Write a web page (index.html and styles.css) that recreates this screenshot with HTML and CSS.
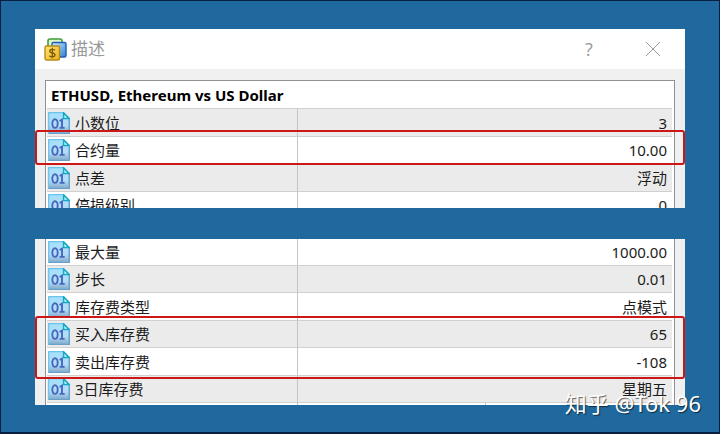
FILE: index.html
```html
<!DOCTYPE html>
<html lang="zh-CN">
<head>
    <meta charset="UTF-8">
    <meta name="viewport" content="width=device-width, initial-scale=1.0">
    <title>描述</title>
    <link rel="stylesheet" href="styles.css">
</head>
<body>

<!-- Shared icon shapes -->
<svg class="sprite" aria-hidden="true">
    <defs>
        <linearGradient id="page-fill" x1="0" y1="0" x2="0" y2="1">
            <stop offset="0" stop-color="#a4e0fb"/>
            <stop offset="0.6" stop-color="#b4dcf8"/>
            <stop offset="1" stop-color="#86abcb"/>
        </linearGradient>
        <linearGradient id="gold-fill" x1="0" y1="0" x2="1" y2="1">
            <stop offset="0" stop-color="#ffe672"/>
            <stop offset="1" stop-color="#efb21e"/>
        </linearGradient>
        <linearGradient id="blue-fill" x1="0" y1="0" x2="1" y2="1">
            <stop offset="0" stop-color="#d2ecff"/>
            <stop offset="1" stop-color="#2c7fd6"/>
        </linearGradient>
        <symbol id="number" viewBox="0 0 22 22">
            <path d="M.7.7h15l5.6 5.6v15H.7z" fill="url(#page-fill)" stroke="#6cc3ec" stroke-width="1.3"/>
            <path d="M.7 21.3h20.6V6" fill="none" stroke="#6c9fc8" stroke-width="1.3"/>
            <path d="M15.6 1v5.6H21z" fill="#c9fbff" stroke="#14a9c4" stroke-width="1.5"/>
            <ellipse cx="7" cy="11.6" rx="2.7" ry="4.3" fill="none" stroke="#4468bd" stroke-width="1.9"/>
            <path d="M11.6 9l2.4-1.4v8.300M11.600 15.900h5" fill="none" stroke="#4468bd" stroke-width="1.9"/>
        </symbol>
    </defs>
</svg>

<main class="page">
    <section class="panel panel-top">
        <header class="titlebar">
            <svg class="logo" viewBox="0 0 23 23" aria-hidden="true">
                <path d="M4 7V3q0-2 2-2h10q2 0 2 2v9H4z" fill="#dff5c8" stroke="#3f9d3a" stroke-width="1.6"/>
                <rect x="8" y="4.5" width="14" height="14.5" rx="1.5" fill="url(#blue-fill)" stroke="#1f5fb0" stroke-width="1.4"/>
                <rect x="1" y="8" width="14.5" height="14" rx="1.5" fill="url(#gold-fill)" stroke="#b98a18" stroke-width="1.4"/>
                <path d="M11 12.3q-1-1-2.8-1-2.5 0-2.5 1.8 0 1.5 2.6 1.9 2.7.4 2.7 2 0 1.8-2.7 1.8-2 0-3-1.1M8.3 9.8v10.4" fill="none" stroke="#7b5a08" stroke-width="1.3"/>
            </svg>
            <h1>描述</h1>
            <button class="win-button" type="button" aria-label="帮助">?</button>
            <button class="win-button" type="button" aria-label="关闭">
                <svg class="close" viewBox="0 0 16 16"><path d="M1 1l14 14M15 1L1 15" fill="none" stroke="#999" stroke-width="1"/></svg>
            </button>
        </header>
        <div class="content">
            <table class="list">
                <colgroup><col class="col-name"><col></colgroup>
                <thead>
                    <tr><th colspan="2">ETHUSD, Ethereum vs US Dollar</th></tr>
                </thead>
                <tbody>
                    <tr><th scope="row"><div><svg class="icon"><use href="#number"/></svg>小数位</div></th><td>3</td></tr>
                    <tr><th scope="row"><div><svg class="icon"><use href="#number"/></svg>合约量</div></th><td>10.00</td></tr>
                    <tr><th scope="row"><div><svg class="icon"><use href="#number"/></svg>点差</div></th><td>浮动</td></tr>
                    <tr><th scope="row"><div><svg class="icon"><use href="#number"/></svg>停损级别</div></th><td>0</td></tr>
                </tbody>
            </table>
        </div>
        <div class="mark mark-size"></div>
    </section>

    <section class="panel panel-bottom">
        <div class="content">
            <table class="list">
                <colgroup><col class="col-name"><col class="col-extra"><col></colgroup>
                <tbody>
                    <tr><th scope="row"><div><svg class="icon"><use href="#number"/></svg>最大量</div></th><td colspan="2">1000.00</td></tr>
                    <tr><th scope="row"><div><svg class="icon"><use href="#number"/></svg>步长</div></th><td colspan="2">0.01</td></tr>
                    <tr><th scope="row"><div><svg class="icon"><use href="#number"/></svg>库存费类型</div></th><td colspan="2">点模式</td></tr>
                    <tr><th scope="row"><div><svg class="icon"><use href="#number"/></svg>买入库存费</div></th><td colspan="2">65</td></tr>
                    <tr><th scope="row"><div><svg class="icon"><use href="#number"/></svg>卖出库存费</div></th><td colspan="2">-108</td></tr>
                    <tr><th scope="row"><div><svg class="icon"><use href="#number"/></svg>3日库存费</div></th><td colspan="2">星期五</td></tr>
                    <tr><td class="blank"></td><td></td><td></td></tr>
                </tbody>
            </table>
        </div>
        <div class="mark mark-swap"></div>
    </section>

    <p class="watermark">知乎 @Tok 96</p>
</main>

</body>
</html>
```

FILE: styles.css
```css
* {
    box-sizing: border-box;
}
body {
    margin: 0;
    background-color: #20699f;
    font-family: "Noto Sans", "Noto Sans CJK SC", sans-serif;
    font-size: 15px;
    color: #1c1c1c;
}
.sprite {
    position: absolute;
    width: 0;
    height: 0;
}
.page {
    position: relative;
    display: flex;
    flex-direction: column;
    gap: 31px;
    min-height: 100vh;
    padding: 28px 34px 27px;
    border: 1px solid #08203f;
    border-bottom-width: 2px;
}
.panel {
    position: relative;
    overflow: hidden;
    background-color: #f0f0f0;
}
.panel-top {
    height: 179px;
}
.panel-bottom {
    height: 166px;
}

/* Title bar */
.titlebar {
    display: flex;
    align-items: center;
    height: 40px;
    padding-left: 9px;
    background-color: #fff;
}
.logo {
    width: 23px;
    height: 23px;
    margin-right: 4px;
}
h1 {
    flex: 1;
    margin: 0;
    font-size: 17px;
    line-height: 20px;
    font-weight: normal;
    color: #999;
}
.win-button {
    display: flex;
    align-items: center;
    justify-content: center;
    width: 64px;
    height: 40px;
    padding: 0;
    border: 0;
    background: none;
    font-family: "Open Sans", sans-serif;
    font-size: 18px;
    color: #999;
}
.close {
    width: 16px;
    height: 16px;
}

/* Property list */
.content {
    padding: 11px 10px 0;
}
.panel-bottom .content {
    margin-top: -2px;
    padding-top: 0;
}
.list {
    width: 100%;
    table-layout: fixed;
    border-collapse: separate;
    border-spacing: 0;
    border: 1px solid #8f9196;
    border-bottom: 0;
    padding: 0 2px 0 1px;
    background-color: #fff;
}
.panel-bottom .list {
    border-top: 0;
}
.col-name {
    width: 40%;
}
.col-extra {
    width: 30%;
}
.list th,
.list td {
    height: 28px;
    padding: 0;
    border-top: 1px solid #d0d0d0;
    line-height: 20px;
    font-weight: normal;
}
.list th {
    text-align: left;
}
.list td {
    padding-right: 5px;
    border-left: 1px solid #c4c4c4;
    text-align: right;
}
.list .blank {
    border-left: 0;
}
.list th div {
    display: flex;
    align-items: center;
    gap: 5px;
    padding-left: 1px;
}
.list tr:nth-child(even) > * {
    height: 27px;
}
.list thead th {
    height: 27px;
    padding-left: 4px;
    border-top: 0;
    font-weight: bold;
    color: #000;
}
.panel-top tbody tr:nth-child(odd),
.panel-bottom tbody tr:nth-child(even) {
    background-color: #ebebeb;
}
.icon {
    width: 22px;
    height: 22px;
}

/* Red frames over the rows */
.mark {
    position: absolute;
    left: 0;
    right: 0;
    border: 2px solid #cb1717;
    border-radius: 3px;
}
.mark-size {
    top: 101px;
    height: 35px;
}
.mark-swap {
    top: 77px;
    height: 63px;
}

.watermark {
    position: absolute;
    right: 18px;
    bottom: 14px;
    margin: 0;
    font-size: 22px;
    line-height: 30px;
    color: #fff;
    text-shadow: 1px 1px 1px rgba(0, 0, 0, 0.6);
}
```
